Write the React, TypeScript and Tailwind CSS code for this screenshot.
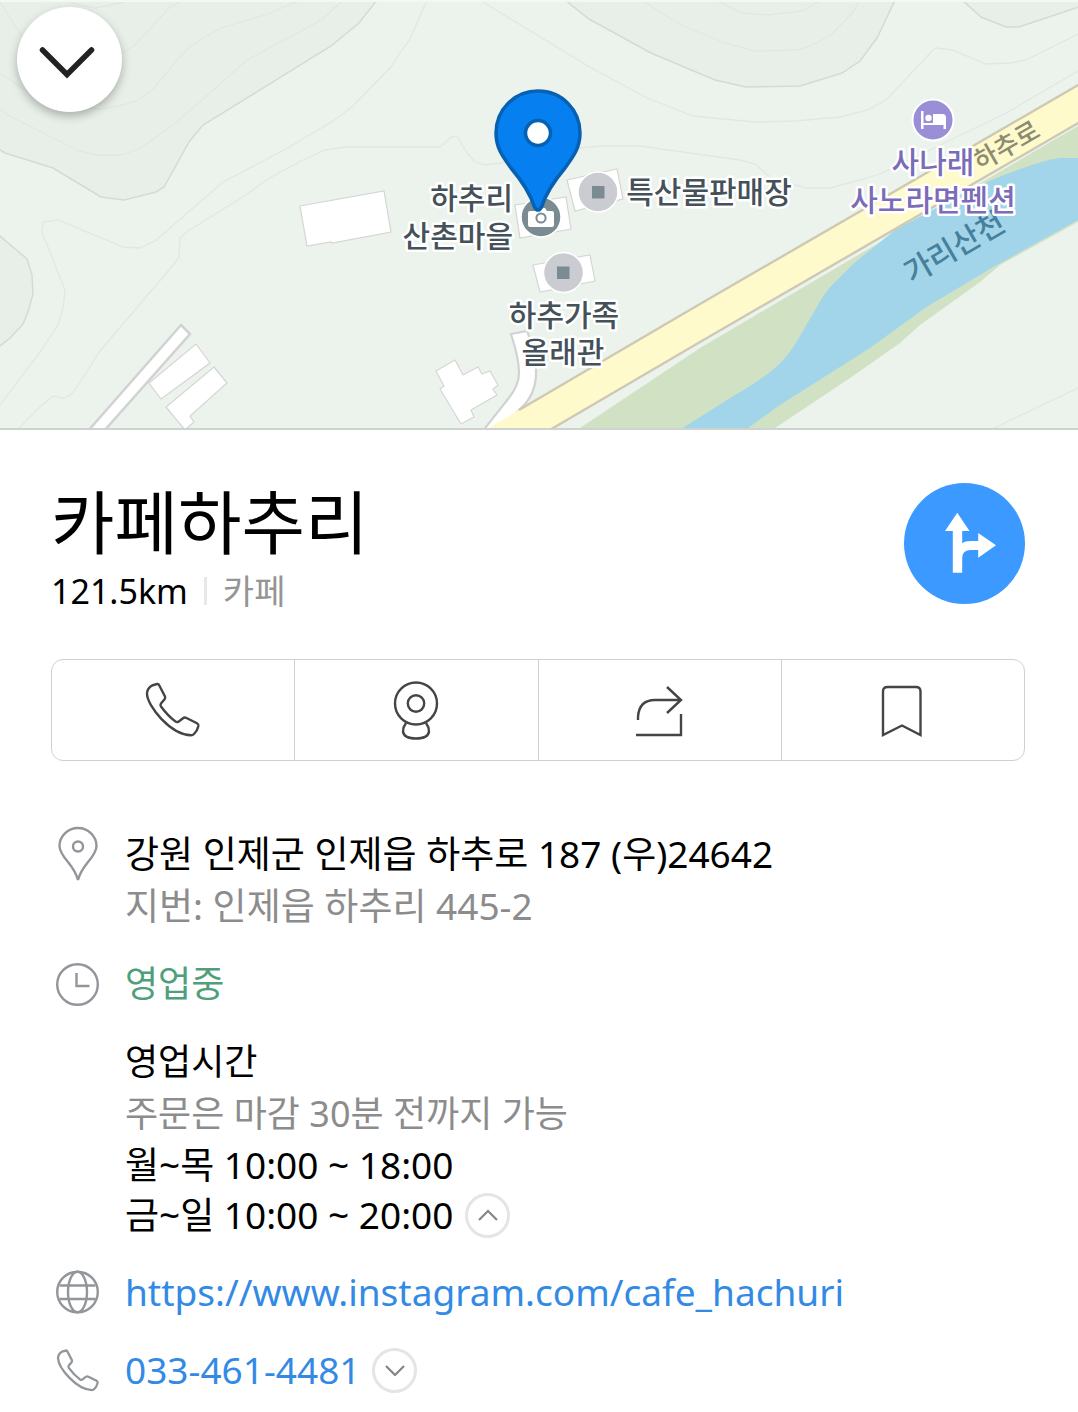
import type { ReactNode } from "react";

const contours = [
  "M0 109 6 114 79 151 97 155 121 155 139 149 177 122 247 60 323 19 343 0",
  "M0 73 22 88 60 106 101 109 119 106 137 101 153 89 186 50 203 38 221 28 268 14 300 0",
  "M0 2 23 38M122 53 134 46 169 8 182 0M65 0 80 5 95 8 125 2",
  "M427 0 410 39 400 53 391 67 352 107 333 121 286 149 223 182 155 241 140 248 123 247 58 220 43 222 42 232 65 290 63 308 58 325 40 352 0 405",
  "M440 147H345L325 150 303 160 266 180 246 195 188 231 180 238 179 257 174 264 100 351 75 390 69 396 63 398 53 396 42 405 17 430",
  "M440 147 451 137 457 136 465 150 475 162 485 165 500 163 560 150 600 146 640 146 740 160 755 164 770 177 806 188 830 188 860 180 880 174 930 150 1008 112 1078 71",
  "M483 2 588 66 645 97 693 116 755 122 795 121 840 117 868 110 886 100 933 50 937 48 952 50 986 64 1011 63 1026 60 1078 34",
  "M641 0 681 25 725 43 755 51 797 50 810 46 831 35 853 12 860 0M716 0 741 13 769 15 802 11 822 0",
  "M990 430 1078 388",
];

const hills = [
  "M0 150 5 153 53 168 101 197 124 200 156 192 164 187 189 142 203 125 331 46 359 23 377 0V-4H-4V150Z",
  "M0 236 27 259 32 275 33 294 28 312 23 324 10 338 0 346-4 346V236Z",
  "M565 0 589 19 651 53 715 80 746 87 800 86 842 73 860 61 877 38 895 0V-4H565Z",
  "M962 0 981 17 1006 27H1019L1082 6V-4H962Z",
];

const buildings = [
  "M300 206 384 191 391 232 332 243 331 242 307 246Z",
  "M196 344 210 363 161 399 149 383Z",
  "M214 367 227 383 190 416 194 422 185 430 166 407Z",
  "M436 371 455 360 463 375 478 367 482 374 490 371 498 385 493 389 497 395 471 410 474 417 461 424 440 389 444 386Z",
  "M515 205 566 197 571 229 520 238Z",
  "M567 180 617 169 623 199 575 211Z",
  "M533 265 590 255 595 281 540 292Z",
];

const placeLabels = [
  { text: "하추리", x: 513, y: 209, anchor: "end", fill: "#455159" },
  { text: "산촌마을", x: 513, y: 247, anchor: "end", fill: "#455159" },
  { text: "특산물판매장", x: 709, y: 203, anchor: "middle", fill: "#455159" },
  { text: "하추가족", x: 564, y: 326, anchor: "middle", fill: "#455159" },
  { text: "올래관", x: 563, y: 363, anchor: "middle", fill: "#455159" },
  { text: "사나래", x: 933, y: 173, anchor: "middle", fill: "#7a6cb8" },
  { text: "사노라면펜션", x: 933, y: 211, anchor: "middle", fill: "#7a6cb8" },
] as const;

function MapView() {
  return (
    <svg
      viewBox="0 0 1078 430"
      preserveAspectRatio="xMidYMid slice"
      className="block h-[430px] w-full font-['Noto_Sans_CJK_KR',sans-serif] font-medium"
      role="img"
      aria-label="지도"
    >
      <rect width="1078" height="430" fill="#ebf3ec" />
      {hills.map((d) => (
        <path key={d} d={d} fill="#e8efe8" stroke="#d3dbd3" strokeWidth="1.5" />
      ))}
      {contours.map((d) => (
        <path key={d} d={d} fill="none" stroke="#e0e8e0" strokeWidth="1.3" />
      ))}

      {/* river and its banks */}
      <path
        d="M1078 126 1035 151 700 348 577 430H772L850 378 900 343 920 325 980 282 1000 265 1078 222Z"
        fill="#d0e2c3"
      />
      <path
        d="M1078 158H1060L1048 160Q1000 174 960 195L895 230 853 264 830 287Q822 297 818 305L800 336Q788 357 775 368 758 382 735 395L678 431H744L780 405 870 348 925 308 995 266 1078 220Z"
        fill="#a3d5ea"
      />

      {/* roads */}
      <path d="M181 325 190 334 104 431H88Z" fill="#fff" stroke="#d2d2d2" strokeWidth="2.5" />
      {buildings.map((d) => (
        <path key={d} d={d} fill="#fff" stroke="#d4d6d4" strokeWidth="1.2" />
      ))}
      <path
        d="M511 334 527 331Q535 350 536 370 537 395 519 410L500 432H482L508 399Q519 386 519 373 519 358 511 334Z"
        fill="#fff"
        stroke="#d2d2d2"
        strokeWidth="2.2"
      />
      <path d="M1078 85 700 304 519 410 484 431H550L700 342 1078 123Z" fill="#fffacb" />
      <path d="M1080 84 700 304 519 410M1080 122 700 342 548 431" fill="none" stroke="#cdc9b5" strokeWidth="2.4" />

      <text x="1006" y="155" textAnchor="middle" fontSize="26" fill="#8c8b72" transform="rotate(-30 1006 145)">
        하추로
      </text>
      <text x="954" y="258" textAnchor="middle" fontSize="30" fill="#47809a" transform="rotate(-30 954 247)">
        가리산천
      </text>

      {/* place markers */}
      <circle cx="541" cy="217" r="20" fill="#7b8b92" stroke="#fff" strokeWidth="1.5" />
      <path d="M530 211h5l2-3h8l2 3h5a2 2 0 0 1 2 2v12a2 2 0 0 1-2 2h-22a2 2 0 0 1-2-2v-12a2 2 0 0 1 2-2Z" fill="#fff" />
      <circle cx="541" cy="218" r="4.6" fill="#fff" stroke="#7b8b92" strokeWidth="2" />
      <circle cx="598" cy="192" r="20" fill="#cbccd1" stroke="#fff" strokeWidth="1.5" />
      <rect x="592" y="186" width="12.5" height="12.5" fill="#7b8b92" />
      <circle cx="563.5" cy="272.5" r="20" fill="#cbccd1" stroke="#fff" strokeWidth="1.5" />
      <rect x="557" y="266.5" width="12.5" height="12.5" fill="#7b8b92" />
      <circle cx="933" cy="120" r="20.5" fill="#9a8fd6" stroke="#fff" strokeWidth="2" />
      <path d="M921 111h2.5v12h9.500v-9h9.500q3.500 0 3.500 4v11h-2.500v-4h-20v4H921Z" fill="#fff" />
      <circle cx="928.5" cy="118" r="3.2" fill="#fff" />

      {placeLabels.map((l) => (
        <text
          key={l.text}
          x={l.x}
          y={l.y}
          textAnchor={l.anchor}
          fontSize="30"
          fill={l.fill}
          stroke="#fff"
          strokeWidth="5"
          strokeLinejoin="round"
          paintOrder="stroke"
        >
          {l.text}
        </text>
      ))}

      <path
        d="M538 91C562 91 580 110 580 133 580 148 573 157 565 168 554 181 546 193 541.5 207Q538 213 534.5 207C530 193 522 181 511 168 503 157 496 148 496 133 496 110 514 91 538 91Z"
        fill="#067ff0"
        stroke="#0761b3"
        strokeWidth="3.5"
      />
      <circle cx="538" cy="133" r="12.5" fill="#fff" stroke="#0761b3" strokeWidth="3.5" />
      <path d="M0 1H1078" stroke="#f3f8f4" strokeWidth="2" />
      <path d="M0 429H1078" stroke="#cdd3ce" strokeWidth="2" />
    </svg>
  );
}

const phonePath =
  "M7 3.5 12 2Q13.5 1.7 14.2 3.2L20 14.5Q20.6 16 19.6 17.2L16 21.5Q15 23 16 24.5C20 30 25 35.5 30.5 39.5Q32 40.5 33.5 39.7L38 36.2Q39.6 35 41.5 36L52 41.2Q53.7 42.2 53.4 44 52.5 48.5 49 52 47.8 53.3 46 53.3C25 52.5 2.5 24 2 12Q2 6.5 7 3.5Z";

const actions = [
  {
    label: "전화",
    icon: (
      <svg viewBox="0 0 56 56" className="size-14">
        <path d={phonePath} />
      </svg>
    ),
  },
  {
    label: "로드뷰",
    icon: (
      <svg viewBox="0 0 48 60" className="h-[60px] w-12">
        <circle cx="24" cy="23.5" r="21" />
        <circle cx="24" cy="23.5" r="8.2" />
        <path d="M14 43Q11 47 11 51.5 12 58.5 24 58.5T37 51.5Q37 47 34 43" />
      </svg>
    ),
  },
  {
    label: "공유",
    icon: (
      <svg viewBox="0 0 50 56" className="h-14 w-[50px]">
        <path d="M3 38V35Q4 18 20 18H46M32 5 46 18 32 31M46 32V53H1" />
      </svg>
    ),
  },
  {
    label: "저장",
    icon: (
      <svg viewBox="0 0 44 56" className="h-14 w-11">
        <path d="M2 53V9.5Q2 5 6.5 5H35Q39.5 5 39.5 9.5V53L21 43.5Z" />
      </svg>
    ),
  },
];

function InfoRow({ icon, children }: { icon?: ReactNode; children: ReactNode }) {
  return (
    <div className="flex gap-5">
      <div className="flex h-[52px] w-[54px] shrink-0 items-center justify-center">
        {icon}
      </div>
      <div className="min-w-0 flex-1">{children}</div>
    </div>
  );
}

function InfoIcon({ children }: { children: ReactNode }) {
  return (
    <svg
      viewBox="0 0 46 56"
      className="h-14 w-[46px] fill-none stroke-[#92969b] stroke-[2.4]"
      aria-hidden="true"
    >
      {children}
    </svg>
  );
}

function ToggleButton({ label, open }: { label: string; open?: boolean }) {
  return (
    <button
      type="button"
      aria-label={label}
      aria-expanded={open ?? false}
      className="flex size-[45px] shrink-0 items-center justify-center rounded-full border-[3px] border-[#e5e5e5]"
    >
      <svg viewBox="0 0 20 12" className="h-3 w-5 fill-none stroke-[#858585] stroke-[2.2]">
        <path d={open ? "M1 11 10 2 19 11" : "M1 2 10 11 19 2"} />
      </svg>
    </button>
  );
}

export default function App() {
  return (
    <div className="min-h-screen bg-white font-['Noto_Sans','Noto_Sans_CJK_KR',sans-serif] text-black">
      <header className="relative">
        <MapView />
        <button
          type="button"
          aria-label="닫기"
          className="absolute left-[17px] top-[7px] flex size-[105px] items-center justify-center rounded-full bg-white shadow-[0_4px_10px_rgba(0,0,0,0.28)]"
        >
          <svg
            viewBox="0 0 105 105"
            className="size-full fill-none stroke-[#222] stroke-[5.5]"
            strokeLinecap="round"
          >
            <path d="M25.5 43 50 67.5 74.5 43" />
          </svg>
        </button>
      </header>

      <main className="pl-[51px] pr-[53px]">
        <div className="flex items-start justify-between pt-[53px]">
          <div>
            <h1 className="text-[69px] leading-[78px]">카페하추리</h1>
            <div className="flex items-center text-[34px] leading-[60px]">
              <span>121.5km</span>
              <span className="mx-4 h-7 w-[3px] bg-[#e8e8e8]" />
              <span className="text-[#959595]">카페</span>
            </div>
          </div>
          <a
            href="#directions"
            aria-label="길찾기"
            className="size-[121px] shrink-0 rounded-full bg-[#3b99ff]"
          >
            <svg viewBox="0 0 121 121" className="size-full fill-white">
              <path d="M53.3 29.7 65.5 48H58.2V60.3Q61 58 66.7 58H74.2V50L92 62.3 74.2 74.7V67H66Q58.2 67.5 58.2 75.3V89.7H48.8V48H41Z" />
            </svg>
          </a>
        </div>

        <div className="mt-[38px] flex divide-x divide-[#d0d0d0] overflow-hidden rounded-xl border border-[#d0d0d0]">
          {actions.map((a) => (
            <button
              key={a.label}
              type="button"
              aria-label={a.label}
              className="flex h-[100px] flex-1 items-center justify-center fill-none stroke-[#454545] stroke-[2.4]"
            >
              {a.icon}
            </button>
          ))}
        </div>

        <div className="mt-[67px] flex flex-col gap-[26px] pb-4 text-[37px] leading-[52px]">
          <InfoRow
            icon={
              <InfoIcon>
                <path d="M23 54Q21 46 13 36 4.5 26 4.5 20A18.5 18 0 0 1 41.5 20Q41.5 26 33 36 25 46 23 54Z" />
                <circle cx="23" cy="20.5" r="5" />
              </InfoIcon>
            }
          >
            <p>강원 인제군 인제읍 하추로 187 (우)24642</p>
            <p className="text-[#8c8c8c]">지번: 인제읍 하추리 445-2</p>
          </InfoRow>

          <InfoRow
            icon={
              <InfoIcon>
                <circle cx="22.5" cy="28.5" r="20.3" />
                <path d="M21.5 17V30H34.5" />
              </InfoIcon>
            }
          >
            <p className="text-[36px] text-[#4fa07a]">영업중</p>
          </InfoRow>

          <InfoRow>
            <p className="text-[36px]">영업시간</p>
            <p className="text-[36px] text-[#8c8c8c]">주문은 마감 30분 전까지 가능</p>
            <p className="leading-[50px]">월~목 10:00 ~ 18:00</p>
            <div className="flex items-center gap-3 leading-[50px]">
              <span>금~일 10:00 ~ 20:00</span>
              <ToggleButton label="영업시간 접기" open />
            </div>
          </InfoRow>

          <InfoRow
            icon={
              <InfoIcon>
                <circle cx="22.5" cy="28" r="20.3" />
                <ellipse cx="22.5" cy="28" rx="9.5" ry="20.3" />
                <path d="M4.5 21.5H40.5M4.5 35H40.5" />
              </InfoIcon>
            }
          >
            <a href="https://www.instagram.com/cafe_hachuri" className="text-[#338ae4]">
              https://www.instagram.com/cafe_hachuri
            </a>
          </InfoRow>

          <InfoRow
            icon={
              <InfoIcon>
                <path d={phonePath} transform="translate(1.5 7) scale(.77)" strokeWidth="3" />
              </InfoIcon>
            }
          >
            <div className="flex items-center gap-3">
              <a href="tel:033-461-4481" className="text-[#338ae4]">
                033-461-4481
              </a>
              <ToggleButton label="전화번호 더보기" />
            </div>
          </InfoRow>
        </div>
      </main>
    </div>
  );
}
